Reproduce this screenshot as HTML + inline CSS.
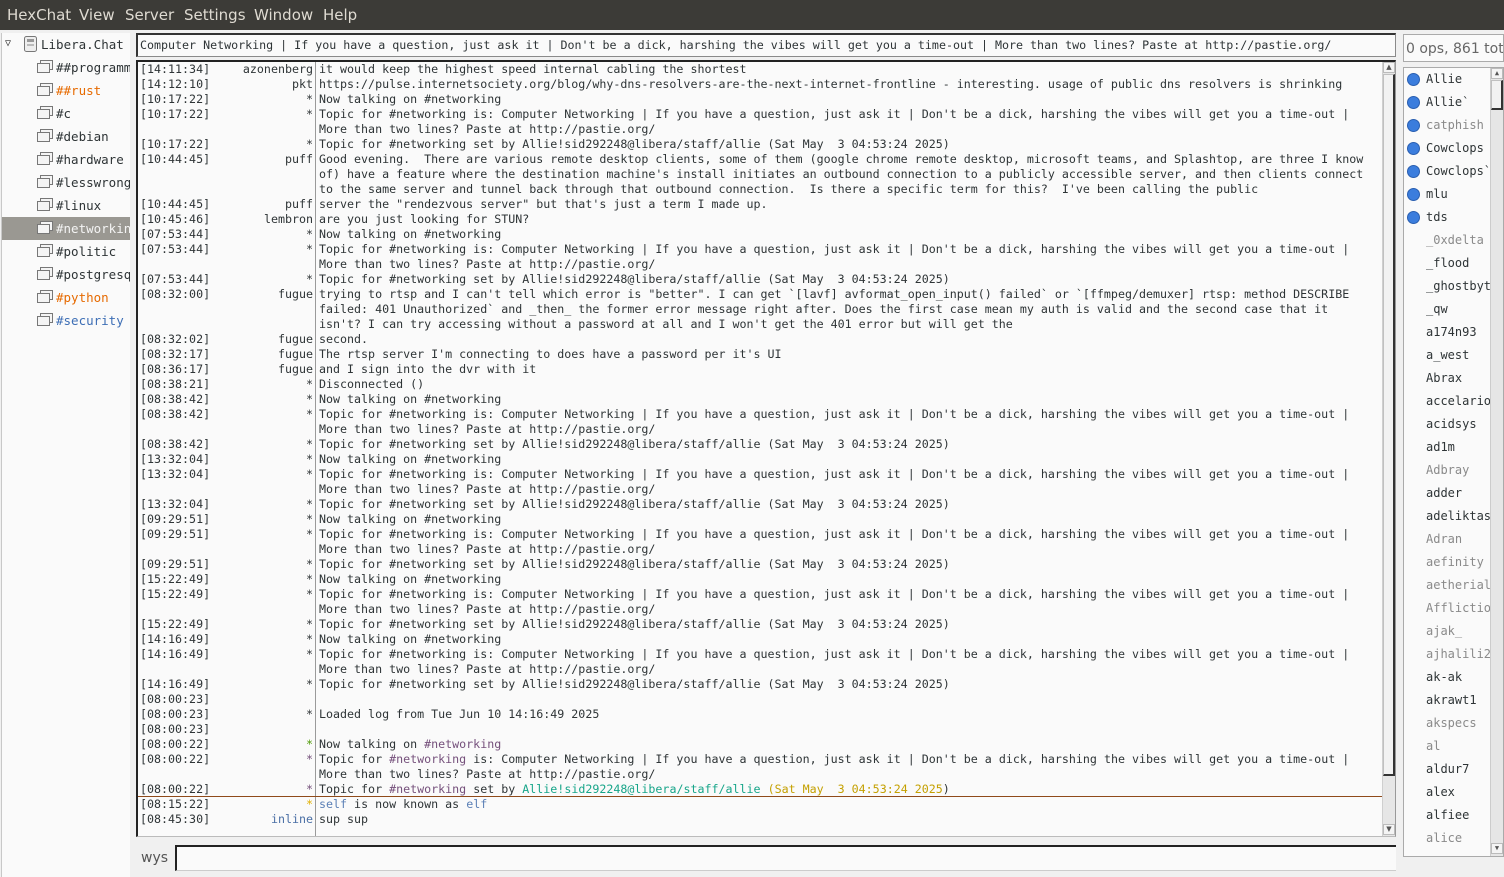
<!DOCTYPE html>
<html><head><meta charset="utf-8"><style>
*{margin:0;padding:0;box-sizing:border-box}
body{width:1504px;height:877px;overflow:hidden;background:#f0f0f0;font-family:"DejaVu Sans","Liberation Sans",sans-serif;position:relative}
.menu{position:absolute;left:0;top:0;width:1504px;height:30px;background:#3c3b37;color:#dfdbd2;font-size:15px}
.menu span{position:absolute;top:6px}
.left{position:absolute;left:1px;top:33px;width:129px;height:844px;background:#fafafa;border-left:1px solid #c8c8c8;overflow:hidden;font-family:"DejaVu Sans Mono",monospace;font-size:12.5px;color:#2e3436}
.ch{position:absolute;left:0;width:129px;height:23px;line-height:23px;white-space:nowrap;padding-left:54px}
.ch svg{position:absolute;left:35px;top:4px}
.sel{background:#9a9892;color:#f4f4f4}
.topic{position:absolute;left:136px;top:33px;width:1260px;height:24px;background:#fafafa;border:1px solid #8a8a8a;border-top:2px solid #333;border-left:2px solid #333;font-family:"DejaVu Sans Mono",monospace;font-size:11.65px;line-height:20px;padding-left:2px;color:#2e3436;white-space:nowrap;overflow:hidden}
.chat{position:absolute;left:136px;top:60px;width:1260px;height:777px;background:#fafafa;border-top:2px solid #222;border-left:2px solid #222;border-right:1px solid #999;border-bottom:1px solid #bbb;overflow:hidden}
.lines{position:absolute;left:0;top:0;width:1240px;font-family:"DejaVu Sans Mono",monospace;font-size:11.65px;line-height:15px;color:#2e3436;white-space:nowrap}
.lines span{white-space:pre}
.r{height:15px;position:relative}
.t{position:absolute;left:2px}
.n{position:absolute;left:100px;width:75px;text-align:right}
.x{position:absolute;left:181px}
.sep{position:absolute;left:177px;top:0;width:1px;height:777px;background:#9a9a9a}
.vs{position:absolute;top:0;right:0;width:13px;height:775px;background:#e6e6e6;border-left:1px solid #cfcfcf}
.thumb{position:absolute;left:0;top:12px;width:12px;height:702px;background:#f2f2f2;border:1px solid #c0c0c0;border-right:2px solid #333;border-bottom:2px solid #333}
.arr{position:absolute;left:0;width:12px;height:11px;background:#f4f4f4;border:1px solid #bbb;font-size:7px;text-align:center;line-height:9px;color:#555}
.input{position:absolute;left:175px;top:845px;width:1221px;height:26px;background:#fafafa;border-top:2px solid #222;border-left:2px solid #222;border-bottom:1px solid #ccc}
.nick{position:absolute;left:141px;top:850px;font-size:14px;color:#555}
.ucount{position:absolute;left:1403px;top:34px;width:101px;height:28px;background:#fafafa;border:1px solid #aaa;font-size:14px;color:#666;line-height:28px;padding-left:2px;white-space:nowrap;overflow:hidden}
.ul{position:absolute;left:1403px;top:67px;width:101px;height:790px;background:#fafafa;border:1px solid #aaa;overflow:hidden;font-family:"DejaVu Sans Mono",monospace;font-size:12px;color:#2e3436}
.u{position:absolute;left:22px;height:23px;line-height:23px;white-space:nowrap}
.dot{position:absolute;left:3px;width:13px;height:13px;border-radius:50%;background:#3b7ddd;border:1px solid #2a5fb0}
.g{color:#8a8a8a}
.uvs{position:absolute;left:86px;top:0;width:14px;height:790px;background:#e6e6e6;border-left:1px solid #ccc}
</style></head><body>
<div class="menu"><span style="left:7px">HexChat</span><span style="left:79px">View</span><span style="left:125px">Server</span><span style="left:184px">Settings</span><span style="left:254px">Window</span><span style="left:323px">Help</span></div>

<div class="left">
<div style="position:absolute;left:3px;top:5px;font-size:10px;color:#333">▽</div>
<svg style="position:absolute;left:22px;top:3px" width="13" height="16"><rect x="0.5" y="0.5" width="12" height="15" rx="2" fill="#eee" stroke="#777"/><rect x="3" y="3" width="7" height="3" fill="#999"/><rect x="3" y="8" width="7" height="2" fill="#bbb"/></svg>
<div style="position:absolute;left:39px;top:0;line-height:23px">Libera.Chat</div>
<div class="ch" style="top:23px"><svg width="16" height="15"><rect x="3.5" y="0.5" width="12" height="9" fill="#f4f4f4" stroke="#777"/><rect x="0.5" y="3.5" width="12" height="9" fill="#f4f4f4" stroke="#777"/></svg>##programm</div>
<div class="ch" style="top:46px;color:#e66a00"><svg width="16" height="15"><rect x="3.5" y="0.5" width="12" height="9" fill="#f4f4f4" stroke="#777"/><rect x="0.5" y="3.5" width="12" height="9" fill="#f4f4f4" stroke="#777"/></svg>##rust</div>
<div class="ch" style="top:69px"><svg width="16" height="15"><rect x="3.5" y="0.5" width="12" height="9" fill="#f4f4f4" stroke="#777"/><rect x="0.5" y="3.5" width="12" height="9" fill="#f4f4f4" stroke="#777"/></svg>#c</div>
<div class="ch" style="top:92px"><svg width="16" height="15"><rect x="3.5" y="0.5" width="12" height="9" fill="#f4f4f4" stroke="#777"/><rect x="0.5" y="3.5" width="12" height="9" fill="#f4f4f4" stroke="#777"/></svg>#debian</div>
<div class="ch" style="top:115px"><svg width="16" height="15"><rect x="3.5" y="0.5" width="12" height="9" fill="#f4f4f4" stroke="#777"/><rect x="0.5" y="3.5" width="12" height="9" fill="#f4f4f4" stroke="#777"/></svg>#hardware</div>
<div class="ch" style="top:138px"><svg width="16" height="15"><rect x="3.5" y="0.5" width="12" height="9" fill="#f4f4f4" stroke="#777"/><rect x="0.5" y="3.5" width="12" height="9" fill="#f4f4f4" stroke="#777"/></svg>#lesswrong</div>
<div class="ch" style="top:161px"><svg width="16" height="15"><rect x="3.5" y="0.5" width="12" height="9" fill="#f4f4f4" stroke="#777"/><rect x="0.5" y="3.5" width="12" height="9" fill="#f4f4f4" stroke="#777"/></svg>#linux</div>
<div class="ch sel" style="top:184px"><svg width="16" height="15"><rect x="3.5" y="0.5" width="12" height="9" fill="#f4f4f4" stroke="#777"/><rect x="0.5" y="3.5" width="12" height="9" fill="#f4f4f4" stroke="#777"/></svg>#networking</div>
<div class="ch" style="top:207px"><svg width="16" height="15"><rect x="3.5" y="0.5" width="12" height="9" fill="#f4f4f4" stroke="#777"/><rect x="0.5" y="3.5" width="12" height="9" fill="#f4f4f4" stroke="#777"/></svg>#politic</div>
<div class="ch" style="top:230px"><svg width="16" height="15"><rect x="3.5" y="0.5" width="12" height="9" fill="#f4f4f4" stroke="#777"/><rect x="0.5" y="3.5" width="12" height="9" fill="#f4f4f4" stroke="#777"/></svg>#postgresql</div>
<div class="ch" style="top:253px;color:#e66a00"><svg width="16" height="15"><rect x="3.5" y="0.5" width="12" height="9" fill="#f4f4f4" stroke="#777"/><rect x="0.5" y="3.5" width="12" height="9" fill="#f4f4f4" stroke="#777"/></svg>#python</div>
<div class="ch" style="top:276px;color:#3d6eb5"><svg width="16" height="15"><rect x="3.5" y="0.5" width="12" height="9" fill="#f4f4f4" stroke="#777"/><rect x="0.5" y="3.5" width="12" height="9" fill="#f4f4f4" stroke="#777"/></svg>#security</div>
</div>

<div class="topic">Computer Networking | If you have a question, just ask it | Don't be a dick, harshing the vibes will get you a time-out | More than two lines? Paste at http://pastie.org/</div>

<div class="chat">
<div class="sep"></div>
<div style="position:absolute;left:0;top:734px;width:1246px;height:1px;background:#8f4a1a"></div>
<div class="lines"><div class="r"><span class="t">[14:11:34]</span><span class="n">azonenberg</span><span class="x">it would keep the highest speed internal cabling the shortest</span></div><div class="r"><span class="t">[14:12:10]</span><span class="n">pkt</span><span class="x">https://pulse.internetsociety.org/blog/why-dns-resolvers-are-the-next-internet-frontline - interesting. usage of public dns resolvers is shrinking</span></div><div class="r"><span class="t">[10:17:22]</span><span class="n">*</span><span class="x">Now talking on #networking</span></div><div class="r"><span class="t">[10:17:22]</span><span class="n">*</span><span class="x">Topic for #networking is: Computer Networking | If you have a question, just ask it | Don't be a dick, harshing the vibes will get you a time-out |</span></div><div class="r"><span class="x">More than two lines? Paste at http://pastie.org/</span></div><div class="r"><span class="t">[10:17:22]</span><span class="n">*</span><span class="x">Topic for #networking set by Allie!sid292248@libera/staff/allie (Sat May  3 04:53:24 2025)</span></div><div class="r"><span class="t">[10:44:45]</span><span class="n">puff</span><span class="x">Good evening.  There are various remote desktop clients, some of them (google chrome remote desktop, microsoft teams, and Splashtop, are three I know</span></div><div class="r"><span class="x">of) have a feature where the destination machine's install initiates an outbound connection to a publicly accessible server, and then clients connect</span></div><div class="r"><span class="x">to the same server and tunnel back through that outbound connection.  Is there a specific term for this?  I've been calling the public</span></div><div class="r"><span class="t">[10:44:45]</span><span class="n">puff</span><span class="x">server the "rendezvous server" but that's just a term I made up.</span></div><div class="r"><span class="t">[10:45:46]</span><span class="n">lembron</span><span class="x">are you just looking for STUN?</span></div><div class="r"><span class="t">[07:53:44]</span><span class="n">*</span><span class="x">Now talking on #networking</span></div><div class="r"><span class="t">[07:53:44]</span><span class="n">*</span><span class="x">Topic for #networking is: Computer Networking | If you have a question, just ask it | Don't be a dick, harshing the vibes will get you a time-out |</span></div><div class="r"><span class="x">More than two lines? Paste at http://pastie.org/</span></div><div class="r"><span class="t">[07:53:44]</span><span class="n">*</span><span class="x">Topic for #networking set by Allie!sid292248@libera/staff/allie (Sat May  3 04:53:24 2025)</span></div><div class="r"><span class="t">[08:32:00]</span><span class="n">fugue</span><span class="x">trying to rtsp and I can't tell which error is "better". I can get `[lavf] avformat_open_input() failed` or `[ffmpeg/demuxer] rtsp: method DESCRIBE</span></div><div class="r"><span class="x">failed: 401 Unauthorized` and _then_ the former error message right after. Does the first case mean my auth is valid and the second case that it</span></div><div class="r"><span class="x">isn't? I can try accessing without a password at all and I won't get the 401 error but will get the</span></div><div class="r"><span class="t">[08:32:02]</span><span class="n">fugue</span><span class="x">second.</span></div><div class="r"><span class="t">[08:32:17]</span><span class="n">fugue</span><span class="x">The rtsp server I'm connecting to does have a password per it's UI</span></div><div class="r"><span class="t">[08:36:17]</span><span class="n">fugue</span><span class="x">and I sign into the dvr with it</span></div><div class="r"><span class="t">[08:38:21]</span><span class="n">*</span><span class="x">Disconnected ()</span></div><div class="r"><span class="t">[08:38:42]</span><span class="n">*</span><span class="x">Now talking on #networking</span></div><div class="r"><span class="t">[08:38:42]</span><span class="n">*</span><span class="x">Topic for #networking is: Computer Networking | If you have a question, just ask it | Don't be a dick, harshing the vibes will get you a time-out |</span></div><div class="r"><span class="x">More than two lines? Paste at http://pastie.org/</span></div><div class="r"><span class="t">[08:38:42]</span><span class="n">*</span><span class="x">Topic for #networking set by Allie!sid292248@libera/staff/allie (Sat May  3 04:53:24 2025)</span></div><div class="r"><span class="t">[13:32:04]</span><span class="n">*</span><span class="x">Now talking on #networking</span></div><div class="r"><span class="t">[13:32:04]</span><span class="n">*</span><span class="x">Topic for #networking is: Computer Networking | If you have a question, just ask it | Don't be a dick, harshing the vibes will get you a time-out |</span></div><div class="r"><span class="x">More than two lines? Paste at http://pastie.org/</span></div><div class="r"><span class="t">[13:32:04]</span><span class="n">*</span><span class="x">Topic for #networking set by Allie!sid292248@libera/staff/allie (Sat May  3 04:53:24 2025)</span></div><div class="r"><span class="t">[09:29:51]</span><span class="n">*</span><span class="x">Now talking on #networking</span></div><div class="r"><span class="t">[09:29:51]</span><span class="n">*</span><span class="x">Topic for #networking is: Computer Networking | If you have a question, just ask it | Don't be a dick, harshing the vibes will get you a time-out |</span></div><div class="r"><span class="x">More than two lines? Paste at http://pastie.org/</span></div><div class="r"><span class="t">[09:29:51]</span><span class="n">*</span><span class="x">Topic for #networking set by Allie!sid292248@libera/staff/allie (Sat May  3 04:53:24 2025)</span></div><div class="r"><span class="t">[15:22:49]</span><span class="n">*</span><span class="x">Now talking on #networking</span></div><div class="r"><span class="t">[15:22:49]</span><span class="n">*</span><span class="x">Topic for #networking is: Computer Networking | If you have a question, just ask it | Don't be a dick, harshing the vibes will get you a time-out |</span></div><div class="r"><span class="x">More than two lines? Paste at http://pastie.org/</span></div><div class="r"><span class="t">[15:22:49]</span><span class="n">*</span><span class="x">Topic for #networking set by Allie!sid292248@libera/staff/allie (Sat May  3 04:53:24 2025)</span></div><div class="r"><span class="t">[14:16:49]</span><span class="n">*</span><span class="x">Now talking on #networking</span></div><div class="r"><span class="t">[14:16:49]</span><span class="n">*</span><span class="x">Topic for #networking is: Computer Networking | If you have a question, just ask it | Don't be a dick, harshing the vibes will get you a time-out |</span></div><div class="r"><span class="x">More than two lines? Paste at http://pastie.org/</span></div><div class="r"><span class="t">[14:16:49]</span><span class="n">*</span><span class="x">Topic for #networking set by Allie!sid292248@libera/staff/allie (Sat May  3 04:53:24 2025)</span></div><div class="r"><span class="t">[08:00:23]</span></div><div class="r"><span class="t">[08:00:23]</span><span class="n">*</span><span class="x">Loaded log from Tue Jun 10 14:16:49 2025</span></div><div class="r"><span class="t">[08:00:23]</span></div><div class="r"><span class="t">[08:00:22]</span><span class="n" style="color:#4e9a06">*</span><span class="x">Now talking on <span style="color:#75507b">#networking</span></span></div><div class="r"><span class="t">[08:00:22]</span><span class="n" style="color:#75507b">*</span><span class="x">Topic for <span style="color:#75507b">#networking</span> is: Computer Networking | If you have a question, just ask it | Don't be a dick, harshing the vibes will get you a time-out |</span></div><div class="r"><span class="x">More than two lines? Paste at http://pastie.org/</span></div><div class="r"><span class="t">[08:00:22]</span><span class="n" style="color:#75507b">*</span><span class="x">Topic for <span style="color:#75507b">#networking</span> set by <span style="color:#17a589">Allie!sid292248@libera/staff/allie</span> <span style="color:#c4a000">(Sat May  3 04:53:24 2025</span>)</span></div><div class="r"><span class="t">[08:15:22]</span><span class="n" style="color:#e0b000">*</span><span class="x"><span style="color:#5a7fb5">self</span> is now known as <span style="color:#5a7fb5">elf</span></span></div><div class="r"><span class="t">[08:45:30]</span><span class="n" style="color:#4a6fa5">inline</span><span class="x">sup sup</span></div></div>
<div class="vs"><div class="arr" style="top:0">▲</div><div class="thumb"></div><div class="arr" style="top:762px">▼</div></div>
</div>

<div class="nick">wys</div>
<div class="input"></div>

<div class="ucount">0 ops, 861 total</div>
<div class="ul">
<div class="u" style="top:0"><span class="dot" style="left:-19px;top:5px"></span>Allie</div>
<div class="u" style="top:23px"><span class="dot" style="left:-19px;top:5px"></span>Allie`</div>
<div class="u g" style="top:46px"><span class="dot" style="left:-19px;top:5px"></span>catphish</div>
<div class="u" style="top:69px"><span class="dot" style="left:-19px;top:5px"></span>Cowclops</div>
<div class="u" style="top:92px"><span class="dot" style="left:-19px;top:5px"></span>Cowclops`</div>
<div class="u" style="top:115px"><span class="dot" style="left:-19px;top:5px"></span>mlu</div>
<div class="u" style="top:138px"><span class="dot" style="left:-19px;top:5px"></span>tds</div>
<div class="u g" style="top:161px">_0xdelta</div>
<div class="u" style="top:184px">_flood</div>
<div class="u" style="top:207px">_ghostbyte</div>
<div class="u" style="top:230px">_qw</div>
<div class="u" style="top:253px">a174n93</div>
<div class="u" style="top:276px">a_west</div>
<div class="u" style="top:299px">Abrax</div>
<div class="u" style="top:322px">accelarion</div>
<div class="u" style="top:345px">acidsys</div>
<div class="u" style="top:368px">ad1m</div>
<div class="u g" style="top:391px">Adbray</div>
<div class="u" style="top:414px">adder</div>
<div class="u" style="top:437px">adeliktas</div>
<div class="u g" style="top:460px">Adran</div>
<div class="u g" style="top:483px">aefinity</div>
<div class="u g" style="top:506px">aetherial</div>
<div class="u g" style="top:529px">Afflictio</div>
<div class="u g" style="top:552px">ajak_</div>
<div class="u g" style="top:575px">ajhalili2</div>
<div class="u" style="top:598px">ak-ak</div>
<div class="u" style="top:621px">akrawt1</div>
<div class="u g" style="top:644px">akspecs</div>
<div class="u g" style="top:667px">al</div>
<div class="u" style="top:690px">aldur7</div>
<div class="u" style="top:713px">alex</div>
<div class="u" style="top:736px">alfiee</div>
<div class="u g" style="top:759px">alice</div>
<div class="uvs"><div class="arr" style="top:0">▲</div><div class="thumb" style="top:12px;height:30px"></div><div class="arr" style="top:775px">▼</div></div>
</div>
</body></html>
